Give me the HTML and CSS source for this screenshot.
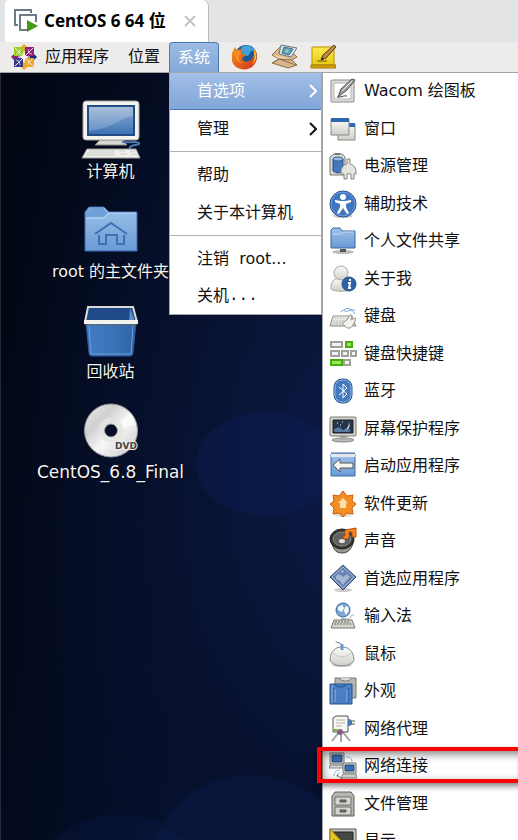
FILE: index.html
```html
<!DOCTYPE html>
<html lang="zh-CN">
<head>
<meta charset="utf-8">
<meta name="viewport" content="width=device-width, initial-scale=1">
<title>CentOS 6 64 位</title>
<link rel="stylesheet" href="styles.css">
</head>
<body>
<svg class="defs" aria-hidden="true">
  <defs>
    <linearGradient id="blue" x1="0" y1="0" x2="0" y2="1"><stop offset="0" stop-color="#9ec2ea"/><stop offset="1" stop-color="#6a9ad5"/></linearGradient>
    <linearGradient id="grey" x1="0" y1="0" x2="0" y2="1"><stop offset="0" stop-color="#fbfbf9"/><stop offset="1" stop-color="#cfcfca"/></linearGradient>
    <linearGradient id="screen" x1="0" y1="0" x2="0" y2="1"><stop offset="0" stop-color="#93b1d2"/><stop offset="1" stop-color="#3a70b4"/></linearGradient>
    <linearGradient id="bin" x1="0" y1="0" x2="1" y2="0"><stop offset="0" stop-color="#3f7bc6"/><stop offset=".5" stop-color="#3c74ba"/><stop offset="1" stop-color="#2f63a6"/></linearGradient>
    <linearGradient id="disc" x1="0" y1="0" x2="1" y2="1"><stop offset="0" stop-color="#f0f0f0"/><stop offset=".3" stop-color="#cfcfcf"/><stop offset=".55" stop-color="#f7f7f7"/><stop offset="1" stop-color="#c6c6c6"/></linearGradient>
    <linearGradient id="gold" x1="0" y1="0" x2="0" y2="1"><stop offset="0" stop-color="#fbea4f"/><stop offset="1" stop-color="#e9c90d"/></linearGradient>
    <linearGradient id="fire" x1="0" y1="0" x2="1" y2="1"><stop offset="0" stop-color="#f39a1e"/><stop offset=".5" stop-color="#e4641b"/><stop offset="1" stop-color="#c9301a"/></linearGradient>
  </defs>
</svg>

<header class="tabs">
  <div class="tab">
    <svg class="tab-icon" viewBox="0 0 24 24" aria-hidden="true">
      <path d="M4 16H1V1h16v3" fill="none" stroke="#6b7c87" stroke-width="2"/>
      <path d="M13 21H6V6h16v7" fill="#fff" stroke="#6b7c87" stroke-width="2"/>
      <path d="M13 11l11 6-11 6z" fill="#3f9a14"/>
    </svg>
    <span class="tab-title">CentOS 6 64 位</span>
    <button class="tab-close" aria-label="关闭">
      <svg viewBox="0 0 12 12"><path d="M1 1l10 10M11 1L1 11" stroke="#c3c3c3" stroke-width="2"/></svg>
    </button>
  </div>
</header>

<nav class="panel">
  <button class="panel-item apps">
    <svg class="launcher-icon" viewBox="0 0 26 26" aria-hidden="true">
      <path d="M13 0l4 4-4 6-4-6z" fill="#efa724"/><path d="M13 26l4-4-4-6-4 6z" fill="#efa724"/>
      <path d="M0 13l4-4 6 4-6 4z" fill="#932279"/><path d="M26 13l-4-4-6 4 6 4z" fill="#262577"/>
      <path d="M3 3h9v9H3z" fill="#9ccd2a"/><path d="M14 3h9v9h-9z" fill="#932279"/>
      <path d="M3 14h9v9H3z" fill="#383c8c"/><path d="M14 14h9v9h-9z" fill="#efa724"/>
      <path d="M4 4l18 18M22 4L4 22" stroke="#f4eef2" stroke-width="1"/>
      <path d="M13 7v12M7 13h12" stroke="#fff" stroke-width="1"/>
      <path d="M9 5l-1 4-3 1M17 5l1 4 3 1M9 21l-1-4-3-1M17 21l1-4 3-1" fill="none" stroke="#fff" stroke-width="1" opacity=".6"/>
    </svg>
    <span>应用程序</span>
  </button>
  <button class="panel-item">位置</button>
  <button class="panel-item active" aria-expanded="true">系统</button>
  <div class="launchers">
    <button aria-label="Firefox">
      <svg class="launcher-icon" viewBox="0 0 26 26">
        <circle cx="14" cy="12" r="11" fill="#1d5795"/>
        <path d="M9 4c4-4 10-3 13 2l-3 1-3 5-5-1z" fill="#3fa3dd"/>
        <path d="M1 7l2-4 2 3 6-1-2 4 5 2-4 3c0 4 5 5 9 2 3-3 4-7 2-12 5 5 5 12 1 17-4 5-12 6-18 2-5-4-6-11-3-16z" fill="url(#fire)"/>
        <path d="M21 4c5 6 4 13-1 17 3-5 3-10 1-17z" fill="#f7bc32"/>
        <path d="M3 8l3-1 4 1-3 3c-1 4 1 7 4 8-5 0-8-4-8-11z" fill="#f58e24"/>
      </svg>
    </button>
    <button aria-label="邮件">
      <svg class="launcher-icon" viewBox="0 0 26 26">
        <path d="M1 11L9 3l14 7 3 3-5 3 5 5-9 3-16-5 7-4z" fill="#d9b68b" stroke="#8f7147"/>
        <path d="M10 1l16 3-6 9-12-3z" fill="#dce5e6" stroke="#687780"/>
        <path d="M13 3l9 2-4 6-7-2z" fill="#5a9dc0" stroke="#47758d"/>
        <path d="M15 5l3 1-1 3-3-1z" fill="#8fcf9c"/>
        <path d="M2 11l8 1 11 4-13-1z" fill="#edcfa7"/>
        <path d="M2 19l6-4 13 1M8 15l17 6" fill="none" stroke="#8f7147"/>
      </svg>
    </button>
    <button aria-label="便笺">
      <svg class="launcher-icon" viewBox="0 0 26 26">
        <path d="M2 3h22v18H2z" fill="url(#gold)" stroke="#b49100"/>
        <path d="M1 21h25v3H1z" fill="#d3a20a" stroke="#a67b00"/>
        <path d="M7 17h10" stroke="#a58d21" stroke-width="2"/>
        <path d="M11 16l2-5L24 1l2 2-10 11z" fill="#bb8845" stroke="#5b3c17"/>
        <path d="M11 16l1-3 2 2z" fill="#222"/>
      </svg>
    </button>
  </div>
</nav>

<main class="desktop">
  <div class="shortcuts">
    <button class="shortcut">
      <svg viewBox="0 0 60 60" aria-hidden="true">
        <path d="M19 40h23l4 5H14z" fill="#d8d8d3" stroke="#8d8d87"/>
        <rect x="2" y="1" width="56" height="39" rx="3" fill="#f3f3ef" stroke="#a6a69f"/>
        <path d="M7 6h46v29H7z" fill="url(#screen)" stroke="#234c84" stroke-width="2"/>
        <path d="M8 7h44v9C40 17 34 28 8 31z" fill="#fff" opacity=".2"/>
        <path d="M41 42c8 1 14-1 17 1 2 3-11 1-9 6" fill="none" stroke="#4779b3" stroke-width="2"/>
        <path d="M6 49h49l4 9H1z" fill="#efefeb" stroke="#9e9e96"/>
        <path d="M8 51h26M6 53h28M5 55h29M38 51h6M39 54h7M49 51h5M50 54h6" stroke="#cfcfc9"/>
      </svg>
      <span>计算机</span>
    </button>
    <button class="shortcut">
      <svg viewBox="0 0 60 60" aria-hidden="true">
        <path d="M4 51V12l4-5h15l5 5h28v39z" fill="url(#blue)" stroke="#3a6aac"/>
        <path d="M5 17v-5l4-4h13l5 5-5 4z" fill="#719fd8"/>
        <path d="M5 18h18l5-5h27" fill="none" stroke="#b9d5f2"/>
        <path d="M14 34l16-11 16 11M18 35v9h7v-9h11v9h7v-9" fill="none" stroke="#3c71b4" stroke-width="2"/>
      </svg>
      <span>root 的主文件夹</span>
    </button>
    <button class="shortcut">
      <svg viewBox="0 0 60 60" aria-hidden="true">
        <path d="M7 7h46l3 16H4z" fill="#20498a"/>
        <path d="M49 8l5 13h-6z" fill="#5b8ccb"/>
        <path d="M5 22h50l-3 31q0 3-3 3H11q-3 0-3-3z" fill="url(#bin)" stroke="#2b5b9e"/>
        <path d="M8 25l2 29h40l2-29" fill="none" stroke="#6f9ed8"/>
        <path d="M7 7h45l4 15H4z" fill="none" stroke="#d9d9d5" stroke-width="2"/>
        <path d="M3 22h54" stroke="#f2f2ef" stroke-width="4"/>
        <path d="M4 25h52" stroke="#60666e"/>
      </svg>
      <span>回收站</span>
    </button>
    <button class="shortcut volume">
      <svg viewBox="0 0 60 60" aria-hidden="true">
        <path fill-rule="evenodd" d="M30 4a26 26 0 1 1 0 53a26 26 0 1 1 0-53zm0 20a6 6 0 1 0 0 13a6 6 0 1 0 0-13z" fill="url(#disc)" stroke="#9a9a9a"/>
        <path d="M35 26L49 13a26 26 0 0 1 6 12l-18 4z" fill="#fff" opacity=".5"/>
        <circle cx="30" cy="30" r="10" fill="none" stroke="#e4e4df" stroke-width="5" opacity=".8"/>
        <text x="34" y="49" class="dvd">DVD</text>
      </svg>
      <span>CentOS_6.8_Final</span>
    </button>
  </div>

  <div class="menu system-menu" role="menu">
    <button class="item selected" role="menuitem"><span>首选项</span><svg class="arrow" viewBox="0 0 8 14"><path d="M1 1l6 6-6 6"/></svg></button>
    <button class="item" role="menuitem"><span>管理</span><svg class="arrow" viewBox="0 0 8 14"><path d="M1 1l6 6-6 6"/></svg></button>
    <hr>
    <button class="item" role="menuitem">帮助</button>
    <button class="item" role="menuitem">关于本计算机</button>
    <hr>
    <button class="item" role="menuitem">注销&nbsp; root...</button>
    <button class="item" role="menuitem">关机<span class="dots">...</span></button>
  </div>

  <div class="menu preferences" role="menu">
    <button class="pref" role="menuitem"><svg viewBox="0 0 28 28"><rect x="2" y="3" width="23" height="22" rx="1" fill="#ddd" stroke="#8a8a86"/><path d="M5 6h17v16H5z" fill="#fff" stroke="#b5b5b0"/><path d="M8 20c4 1 6-2 10-1" fill="none" stroke="#444"/><path d="M9 20l3-8L23 2l3 1-8 10z" fill="#a3a49f" stroke="#4d4f4d"/><path d="M13 14L23 4" stroke="#e4e4e0"/></svg><span>Wacom 绘图板</span></button>
    <button class="pref" role="menuitem"><svg viewBox="0 0 28 28"><path d="M9 9h17v16H9z" fill="url(#grey)" stroke="#888983"/><path d="M9 8h17v4H9z" fill="#2f67b1"/><path d="M2 4h18v16H2z" fill="url(#grey)" stroke="#888983"/><path d="M2 3h18v4H2z" fill="#2f67b1"/></svg><span>窗口</span></button>
    <button class="pref" role="menuitem"><svg viewBox="0 0 28 28"><path d="M5 2h8l3 3v18H1V5z" fill="#d9d9d4" stroke="#777871"/><path d="M6 1h5v2H6z" fill="#777871"/><path d="M4 7v12q5 4 10 0V7z" fill="#4679bb" stroke="#244f8a"/><ellipse cx="9" cy="7" rx="5" ry="2" fill="#96b8e2" stroke="#345f97"/><path d="M18 12V7h3v5c4 1 6 4 6 8v2h-2v5h-3v-5h-4v5h-3v-5h-3v-2c0-4 2-7 6-8z" fill="#e4e4df" stroke="#85857f"/></svg><span>电源管理</span></button>
    <button class="pref" role="menuitem"><svg viewBox="0 0 28 28"><ellipse cx="14" cy="26" rx="10" ry="2" fill="#ccc"/><circle cx="14" cy="14" r="13" fill="#3e76bf" stroke="#204e8c"/><circle cx="14" cy="14" r="12" fill="none" stroke="#77a2d9"/><circle cx="14" cy="7" r="3" fill="#fff"/><path d="M6 10l6 1h4l6-1v2l-5 2v3l3 6-2 1-4-6-4 6-2-1 3-6v-3l-5-2z" fill="#fff"/></svg><span>辅助技术</span></button>
    <button class="pref" role="menuitem"><svg viewBox="0 0 28 28"><ellipse cx="14" cy="25" rx="11" ry="2" fill="#bbb"/><path d="M2 21V3l2-2h7l2 3h13v17z" fill="url(#blue)" stroke="#36659f"/><path d="M3 7h9l2-2h11" fill="none" stroke="#c0d8f2"/><path d="M11 22h6v3h-6z" fill="#555"/></svg><span>个人文件共享</span></button>
    <button class="pref" role="menuitem"><svg viewBox="0 0 28 28"><path d="M2 24c0-7 2-11 10-11s10 4 10 11c-4 3-16 3-20 0z" fill="url(#grey)" stroke="#a6a6a1"/><circle cx="12" cy="8" r="7" fill="url(#grey)" stroke="#a6a6a1"/><circle cx="20" cy="19" r="7" fill="#2e62a9" stroke="#204b87"/><path d="M21 14v2M19 18h2l-1 5h2" fill="none" stroke="#fff" stroke-width="2"/></svg><span>关于我</span></button>
    <button class="pref" role="menuitem"><svg viewBox="0 0 28 28"><path d="M12 10c2-4 5 1 7-1s5 0 7 3M15 8c4-4 7 1 11 0" fill="none" stroke="#6f9ed2" stroke-width="1"/><path d="M4 14h19l4 10H1z" fill="url(#grey)" stroke="#8d8e88"/><path d="M5 16h14M4 19h12M4 21h10" stroke="#b9c2b6" stroke-dasharray="2 1"/><path d="M13 21l5-3 3-5h2l-1 5 4-2 1 1-3 6c-2 4-6 4-8 1z" fill="#f2f2ef" stroke="#979790"/></svg><span>键盘</span></button>
    <button class="pref" role="menuitem"><svg viewBox="0 0 28 28"><g fill="#f3f3f1" stroke="#a0a09a" stroke-width="2"><path d="M2 2h11v5H2zM2 11h8v5H2zM13 11h6v5h-6zM22 11h5v5h-5zM15 20h6v5h-6z"/></g><g fill="#9be75b" stroke="#46ae0b" stroke-width="2"><path d="M17 2h6v5h-6zM2 20h11v5H2z"/></g></svg><span>键盘快捷键</span></button>
    <button class="pref" role="menuitem"><svg viewBox="0 0 28 28"><rect x="5" y="2" width="18" height="24" rx="8" fill="#4379bd" stroke="#245089"/><rect x="6" y="3" width="16" height="22" rx="7" fill="none" stroke="#94b6df"/><path d="M10 10l8 7-4 4V7l4 4-8 7" fill="none" stroke="#fff" stroke-width="1"/></svg><span>蓝牙</span></button>
    <button class="pref" role="menuitem"><svg viewBox="0 0 28 28"><ellipse cx="14" cy="25" rx="11" ry="2" fill="#bcbcb7" stroke="#888983"/><path d="M11 21h7v4h-7z" fill="#aaa"/><rect x="1" y="2" width="26" height="19" rx="1" fill="#d6d6d2" stroke="#7a7a75"/><path d="M4 5h20v13H4z" fill="#25354e" stroke="#222"/><path d="M20 7c2 5-1 9-6 8 4 0 6-4 6-8z" fill="#d9e5f4"/><path d="M5 14l5-2 4 3 7-1v3H5z" fill="#56789e"/><path d="M8 8h1M13 7h1M11 10h1" stroke="#fff"/></svg><span>屏幕保护程序</span></button>
    <button class="pref" role="menuitem"><svg viewBox="0 0 28 28"><path d="M2 2h24v22H2z" fill="url(#blue)" stroke="#3a6aac"/><path d="M2 2h24v3H2z" fill="#e6e8e8"/><path d="M2 1h24" stroke="#316aab"/><path d="M4 13l7-6v4h13v5H11v4z" fill="#f4f4f1" stroke="#555854"/></svg><span>启动应用程序</span></button>
    <button class="pref" role="menuitem"><svg viewBox="0 0 28 28"><ellipse cx="14" cy="25" rx="9" ry="2" fill="#ddd"/><path d="M14 1l4 5 6-1-1 6 4 3-4 4 1 6-6-1-4 4-4-4-6 1 1-6-4-4 4-3-1-6 6 1z" fill="#f58d25" stroke="#c85a09"/><path d="M14 8l5 5h-2v5h-6v-5H9z" fill="#fce0ac"/></svg><span>软件更新</span></button>
    <button class="pref" role="menuitem"><svg viewBox="0 0 28 28"><path d="M2 13c2 7 3 13 11 13s10-6 12-13z" fill="#979792" stroke="#444"/><ellipse cx="13" cy="12" rx="12" ry="10" fill="#343634" stroke="#222"/><ellipse cx="13" cy="12" rx="9" ry="7" fill="#60625f" stroke="#8b8d89"/><ellipse cx="13" cy="14" rx="3" ry="2" fill="#e2e2df"/><path d="M16 9V3l11-2v9h-4V5h-3v5c-1 3-6 2-6 0 0-1 1-1 2-1z" fill="#f58620" stroke="#b94f08"/></svg><span>声音</span></button>
    <button class="pref" role="menuitem"><svg viewBox="0 0 28 28"><ellipse cx="14" cy="25" rx="9" ry="2" fill="#ccc"/><path d="M14 0l13 12-13 13L1 12z" fill="#6882b1" stroke="#344c75"/><path d="M14 2l11 10-11 11L3 12z" fill="none" stroke="#a9b9d6"/><path d="M7 11l3-2 4 3 4-3 3 3-4 4-3 4-3-4-4-2zM12 5l3 1-1 2-2-1z" fill="#a6b7d4"/></svg><span>首选应用程序</span></button>
    <button class="pref" role="menuitem"><svg viewBox="0 0 28 28"><path d="M17 17c7 1 3-5 8-4" fill="none" stroke="#aaa"/><circle cx="14" cy="8" r="7" fill="#7fa7d4" stroke="#35669f"/><path d="M9 5l4-2 2 3-2 4-4-2zM16 5l3-1 1 5-3 4-2-4z" fill="#f4f8fb"/><path d="M12 16h5v3h-5z" fill="#bbb"/><path d="M5 18h18l3 8H2z" fill="#d4d4cf" stroke="#777871"/><path d="M6 20h15M5 22h17" stroke="#666" stroke-dasharray="2 1"/></svg><span>输入法</span></button>
    <button class="pref" role="menuitem"><svg viewBox="0 0 28 28"><ellipse cx="13" cy="25" rx="10" ry="2" fill="#ccc"/><path d="M7 1c0 3 6 0 6 6" fill="none" stroke="#737c85"/><path d="M1 19C2 11 6 7 13 7s11 4 12 12c0 9-24 9-24 0z" fill="url(#grey)" stroke="#898984"/><path d="M4 13c5 5 13 5 18 0" fill="none" stroke="#c6c6c2"/><path d="M13 4v6" stroke="#6499d2" stroke-width="3"/></svg><span>鼠标</span></button>
    <button class="pref" role="menuitem"><svg viewBox="0 0 28 28"><path d="M6 1h21v20H6z" fill="#b4b6ae" stroke="#787a73"/><path d="M11 1c0 4 11 4 11 0" fill="#dadbd6" stroke="#787a73"/><path d="M1 7h22v20H1z" fill="#4a7fc3" stroke="#23528f"/><path d="M6 7c0 4 11 4 11 0M5 11v15M19 11v15" fill="none" stroke="#20508f"/><path d="M6 12v13M18 12v13M3 8v18" stroke="#91b5df"/></svg><span>外观</span></button>
    <button class="pref" role="menuitem"><svg viewBox="0 0 28 28"><path d="M11 16L3 26M12 17v10M13 16l8 10" stroke="#a3a59f" stroke-width="2"/><path d="M4 3l3-2h12v16H4z" fill="#f7f7f4" stroke="#555753"/><path d="M7 5h9M7 8h9M7 11h6" stroke="#b0b0ac"/><path d="M19 4h2l2 2v3l-2 2h-2z" fill="#4c7bb4"/><path d="M22 6h4M22 9h4" stroke="#555"/><circle cx="11" cy="17" r="3" fill="#8b5e8a"/><path d="M5 15h3" stroke="#65b52b" stroke-width="2"/></svg><span>网络代理</span></button>
    <button class="pref marked" role="menuitem"><svg viewBox="0 0 28 28"><path d="M1 1h14v11H1z" fill="#e2e2de" stroke="#6f716c"/><path d="M3 3h10v7H3z" fill="#3b6eac" stroke="#244a7c"/><path d="M1 13h14l2 3H0z" fill="#d4d4cf" stroke="#888"/><path d="M17 5c5 0 6 2 6 5M5 24c0-4 2-6 6-6M8 25c0-3 1-4 3-4" fill="none" stroke="#8db2dd"/><path d="M14 11h13v10H14z" fill="#e2e2de" stroke="#6f716c"/><path d="M16 13h9v6h-9z" fill="#3b6eac" stroke="#244a7c"/><path d="M14 22h13l1 4H12z" fill="#d4d4cf" stroke="#888"/><path d="M8 23l5 4" stroke="#666"/></svg><span>网络连接</span></button>
    <button class="pref" role="menuitem"><svg viewBox="0 0 28 28"><path d="M3 26V6l3-4h16l3 4v20z" fill="#b4b6b0" stroke="#5e605b"/><path d="M6 7h16v8H6zM6 17h16v8H6z" fill="#d5d6d1" stroke="#6e706b"/><path d="M11 10h6v2h-6zM11 20h6v2h-6z" fill="#777974" stroke="#50524e"/></svg><span>文件管理</span></button>
    <button class="pref" role="menuitem"><svg viewBox="0 0 28 28"><path d="M1 2h26v19H1z" fill="#c6c8c3" stroke="#555753"/><path d="M4 5h20v13H4z" fill="#444743" stroke="#222"/><path d="M1 2l19 20H1z" fill="#e6c526" stroke="#95790c"/><path d="M5 12l5 6H5z" fill="#555" stroke="#95790c"/></svg><span>显示</span></button>
  </div>
</main>
</body>
</html>
```
FILE: styles.css
```css
* {
  box-sizing: border-box;
}

body {
  display: flex;
  flex-direction: column;
  height: 100vh;
  margin: 0;
  overflow: hidden;
  font: 16px/22px "DejaVu Sans", "Noto Sans CJK SC", sans-serif;
  color: #111;
}

button {
  margin: 0;
  padding: 0;
  border: 0;
  background: none;
  color: inherit;
  font: inherit;
  text-align: left;
  white-space: nowrap;
}

svg {
  display: block;
  flex: none;
}

.defs {
  position: absolute;
  width: 0;
  height: 0;
}

/* Virtual machine tabs */
.tabs {
  display: flex;
  flex: none;
  height: 42px;
  padding-left: 5px;
  background: #e3e4e6;
}

.tab {
  display: flex;
  align-items: center;
  padding: 0 12px 0 9px;
  border-right: 1px solid #b9babc;
  border-radius: 4px 6px 0 0;
  background: #fff;
}

.tab-icon {
  width: 24px;
  height: 24px;
}

.tab-title {
  margin-left: 6px;
  font-family: "Noto Sans", "Noto Sans CJK SC", sans-serif;
  font-size: 17px;
  font-weight: 700;
  color: #000;
}

.tab-close {
  margin-left: 18px;
}

.tab-close svg {
  width: 12px;
  height: 12px;
}

/* Desktop panel */
.panel {
  position: relative;
  z-index: 2;
  display: flex;
  flex: none;
  height: 31px;
  padding-left: 11px;
  border-bottom: 1px solid #a3a5a6;
  background: #edeceb;
}

.panel-item {
  display: flex;
  align-items: center;
  padding: 0 9px;
}

.panel-item.apps {
  gap: 8px;
  padding: 0 10px 0 0;
}

.panel-item.active {
  padding: 0 8px;
  border: 1px solid #4d78b0;
  border-bottom: 0;
  border-radius: 4px 4px 0 0;
  background: linear-gradient(#9bbbe3, #84a9d9);
  color: #fff;
}

.launchers {
  display: flex;
  align-items: center;
  gap: 13px;
  margin-left: 13px;
}

.launcher-icon {
  width: 26px;
  height: 26px;
}

/* Wallpaper */
.desktop {
  position: relative;
  flex: 1;
  min-height: 0;
  overflow: hidden;
  border-left: 1px solid #252b35;
  background:
    radial-gradient(circle 105px at 250px calc(100% + 39px), rgba(14, 36, 100, 0.22) 98%, transparent),
    radial-gradient(circle 100px at 118px calc(100% + 74px), rgba(14, 36, 100, 0.16) 98%, transparent),
    radial-gradient(ellipse 70px 52px at 264px 391px, rgba(14, 36, 110, 0.22) 98%, transparent),
    radial-gradient(ellipse 360px 560px at 370px 400px, #0c1a47, rgba(8, 18, 48, 0.7) 60%, transparent),
    linear-gradient(100deg, #020612, #05102c 300px);
}

.shortcuts {
  display: flex;
  flex-direction: column;
  gap: 16px;
  width: 219px;
  padding-top: 27px;
}

.shortcut {
  display: flex;
  flex-direction: column;
  align-items: center;
  line-height: 24px;
  color: #f4f4f4;
  text-shadow: 1px 1px 1px #000;
}

.shortcut.volume {
  font-size: 17px;
}

.shortcut svg {
  width: 60px;
  height: 60px;
}

.dvd {
  font: 700 9px "DejaVu Sans", sans-serif;
  fill: #444;
  stroke: #eee;
  stroke-width: 2px;
  paint-order: stroke;
  text-shadow: none;
}

/* Menus */
.menu {
  position: absolute;
  top: -1px;
  display: flex;
  flex-direction: column;
  background: #fff;
}

.system-menu {
  left: 168px;
  width: 153px;
  border: 1px solid #a3a5a6;
  border-top: 0;
}

.menu hr {
  width: 100%;
  margin: 3px 0 4px;
  border: 0;
  border-top: 1px solid #b3b3b3;
}

.item {
  display: flex;
  align-items: center;
  height: 38px;
  padding: 0 4px 0 27px;
}

.item:last-child {
  height: 36px;
}

.item.selected {
  border-bottom: 1px solid #4d78b0;
  background: linear-gradient(#a3c0e8, #82a6d8);
  color: #fff;
}

.arrow {
  width: 8px;
  height: 14px;
  margin-left: auto;
  fill: none;
  stroke: currentColor;
  stroke-width: 2;
}

.dots {
  font-family: "Liberation Mono", monospace;
}

.preferences {
  right: 0;
  left: 321px;
  border-left: 1px solid #a3a5a6;
}

.pref {
  position: relative;
  display: flex;
  flex: none;
  align-items: center;
  gap: 7px;
  height: 37px;
  padding-left: 6px;
}

.pref:nth-child(odd) {
  height: 38px;
}

.pref svg {
  width: 28px;
  height: 28px;
}

.marked::after {
  content: "";
  position: absolute;
  inset: 0 -8px 2px -6px;
  border: 4px solid #f90505;
  box-shadow: 1px 3px 6px rgba(0, 0, 0, 0.5), inset 2px 3px 8px rgba(0, 0, 0, 0.5);
}
```
